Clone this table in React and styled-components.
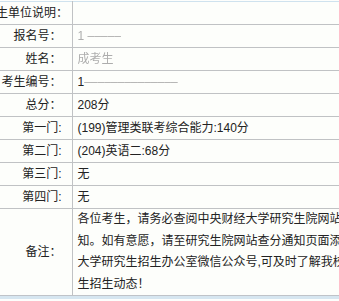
import React from "react";
import styled, { createGlobalStyle } from "styled-components";

const GlobalStyle = createGlobalStyle`
  html, body {
    margin: 0;
    padding: 0;
    background: #fdfefc;
    overflow: hidden;
  }
`;

// masked values are drawn as faint, blurred text
const rows = [
  { label: "考生单位说明：", value: "" },
  { label: "报名号：", lead: "", masked: "1 ‒‒‒‒‒" },
  { label: "姓名：", lead: "", masked: "成考生" },
  { label: "考生编号：", lead: "1", masked: "‒‒‒‒‒‒‒‒‒‒‒‒‒‒" },
  { label: "总分：", value: "208分" },
  { label: "第一门:", value: "(199)管理类联考综合能力:140分" },
  { label: "第二门:", value: "(204)英语二:68分" },
  { label: "第三门:", value: "无" },
  { label: "第四门:", value: "无" },
];

const remark = [
  "各位考生，请务必查阅中央财经大学研究生院网站的复试通",
  "知。如有意愿，请至研究生院网站查分通知页面添加中央财经",
  "大学研究生招生办公室微信公众号,可及时了解我校研究",
  "生招生动态！",
];

function App() {
  return (
    <>
      <GlobalStyle />
      <Frame>
        <ScoreTable>
          <colgroup>
            <col style={{ width: 88 }} />
            <col />
          </colgroup>
          <tbody>
            {rows.map((r) => (
              <tr key={r.label}>
                <Label>{r.label}</Label>
                <Value>
                  {r.masked !== undefined ? (
                    <>
                      {r.lead}
                      <Blur>{r.masked}</Blur>
                    </>
                  ) : (
                    r.value
                  )}
                </Value>
              </tr>
            ))}
            <tr>
              <Label>备注：</Label>
              <Value $multi>
                {remark.map((line) => (
                  <Line key={line}>{line}</Line>
                ))}
              </Value>
            </tr>
          </tbody>
        </ScoreTable>
      </Frame>
    </>
  );
}

export default App;

const Frame = styled.div`
  padding-top: 1px;
  border-bottom: 3px solid #d6e6f0;
  width: 339px;
  overflow: hidden;
`;

const ScoreTable = styled.table`
  margin-left: -16px;
  width: 480px;
  table-layout: fixed;
  border-collapse: collapse;
  border-top: 1px solid #cfe2ee;
  border-bottom: 1px solid #bfc3c8;
  font-family: "Liberation Sans", "Noto Sans CJK SC", sans-serif;
  font-size: 12px;
  color: #222;
  background: #fdfefb;

  tr + tr td {
    border-top: 1px solid #c0c2c4;
  }
`;

const Label = styled.td`
  height: 22px;
  padding: 0 10px 0 0;
  text-align: right;
  white-space: nowrap;
  vertical-align: middle;
  border-right: 1px solid #c0c2c4;
  line-height: 22px;
`;

const Value = styled.td`
  padding: 0 0 0 5px;
  white-space: nowrap;
  vertical-align: middle;
  line-height: ${(p) => (p.$multi ? "21.5px" : "22px")};
`;

const Line = styled.div`
  white-space: nowrap;
`;

const Blur = styled.span`
  display: inline-block;
  color: #9a9a9a;
  filter: blur(0.7px);
  opacity: 0.8;
`;
